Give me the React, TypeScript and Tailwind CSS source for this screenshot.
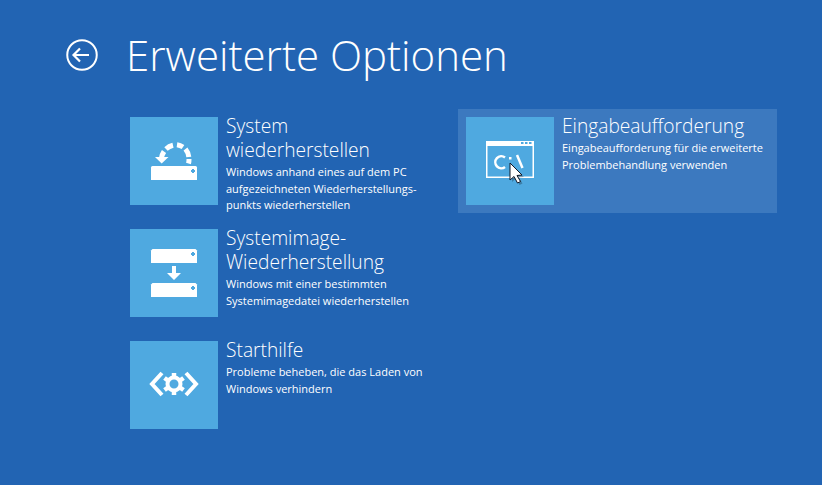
const font = { fontFamily: '"Open Sans", "Noto Sans", sans-serif' };

function RestoreIcon() {
  return (
    <svg width="88" height="88" viewBox="0 0 88 88" fill="white">
      <path d="M21 50.500 a1.500 1.500 0 0 1 1.500 -1.500 H65.500 a1.500 1.500 0 0 1 1.500 1.500 V63 H21 Z" />
      <path d="M62 52 v1 h-1 v2 h1 v1 h2 v-1 h1 v-2 h-1 v-1 Z" fill="#4fa9e0" />
      <path d="M25 40 H38.500 L31.700 46.500 Z" />
      <g fill="none" stroke="white" strokeWidth="5">
        <path d="M31.500 41 A15.500 15.500 0 0 1 34 34.500" />
        <path d="M36 32 A15.500 15.500 0 0 1 43 28.300" />
        <path d="M47 27.800 A15.500 15.500 0 0 1 53 30" />
        <path d="M55.500 32 A15.500 15.500 0 0 1 58.800 40" />
        <path d="M59 42 A15.500 15.500 0 0 1 58.500 46.500" />
      </g>
    </svg>
  );
}

function ImageIcon() {
  return (
    <svg width="88" height="88" viewBox="0 0 88 88" fill="white">
      <path d="M21 21.500 l1.500 -1.500 H65.500 L67 21.500 V34 H21 Z" />
      <path d="M62 23 v1 h-1 v2 h1 v1 h2 v-1 h1 v-2 h-1 v-1 Z" fill="#4fa9e0" />
      <path d="M42 37 H46 V44 H51 L44 51 L37 44 H42 Z" />
      <path d="M21 55.500 l1.500 -1.500 H65.500 L67 55.500 V68 H21 Z" />
      <path d="M62 57 v1 h-1 v2 h1 v1 h2 v-1 h1 v-2 h-1 v-1 Z" fill="#4fa9e0" />
    </svg>
  );
}

function RepairIcon() {
  return (
    <svg width="88" height="88" viewBox="0 0 88 88" fill="none" stroke="white">
      <path d="M32 32 L22 43 L32 54" strokeWidth="4" />
      <path d="M56 32 L66 43 L56 54" strokeWidth="4" />
      <circle cx="44" cy="43" r="6.500" strokeWidth="4" />
      <g strokeWidth="4.500">
        <path d="M44 32 V36" />
        <path d="M44 50 V54" />
        <path d="M34.500 37 L38 39.500" />
        <path d="M50 46.500 L53.500 49" />
        <path d="M34.500 49 L38 46.500" />
        <path d="M50 39.500 L53.500 37" />
      </g>
    </svg>
  );
}

function ConsoleIcon() {
  return (
    <svg width="88" height="88" viewBox="0 0 88 88" fill="none">
      <rect x="20.750" y="24.750" width="46.500" height="35.500" stroke="white" strokeWidth="1.500" />
      <rect x="20" y="24" width="48" height="5" fill="white" />
      <rect x="55" y="25" width="2.500" height="2" fill="#4fa9e0" />
      <rect x="59" y="25" width="2.500" height="2" fill="#4fa9e0" />
      <rect x="63" y="25" width="2.500" height="2" fill="#4fa9e0" />
      <path d="M39 40.500 A6 6 0 1 0 39 50" stroke="white" strokeWidth="2.500" />
      <rect x="43" y="40" width="2.500" height="2.500" fill="white" />
      <path d="M51 38 L56.500 51" stroke="white" strokeWidth="2.500" />
      <path d="M44 46 V63 L48 59.500 L51.500 66 L54.500 64.500 L51 58.500 L56 58 Z" fill="black" opacity="0.25" transform="translate(2 2)" />
      <path d="M44 46 V63 L48 59.500 L51.500 66 L54.500 64.500 L51 58.500 L56 58 Z" fill="white" stroke="#111827" strokeWidth="1" />
    </svg>
  );
}

function Option({
  icon,
  title,
  text,
  active,
}: {
  icon: React.ReactNode;
  title: string[];
  text: string[];
  active?: boolean;
}) {
  return (
    <div className={`flex h-[104px] w-[319px] gap-2 p-2 ${active ? 'bg-[#3c79bf]' : ''}`}>
      <div className="size-[88px] shrink-0 bg-[#4fa9e0]">{icon}</div>
      <div className="-mt-[3px] min-w-0 text-white">
        <div className="text-[19.200px] leading-[24px] font-light whitespace-nowrap">
          {title.map((line) => (
            <div key={line}>{line}</div>
          ))}
        </div>
        <div className="mt-[2px] text-[11px] leading-[16.500px] whitespace-nowrap">
          {text.map((line) => (
            <div key={line}>{line}</div>
          ))}
        </div>
      </div>
    </div>
  );
}

export default function App() {
  return (
    <div className="h-[485px] w-[822px] overflow-hidden bg-[#2264b3] text-white" style={font}>
      <header className="flex items-center gap-[28px] pt-[31px] pl-[66px]">
        <svg width="32" height="32" viewBox="0 0 32 32" fill="none" stroke="white">
          <circle cx="16" cy="16" r="14.750" strokeWidth="2" />
          <path d="M7 16 H23 M14 9.500 L7.500 16 L14 22.500" strokeWidth="2.200" />
        </svg>
        <h1 className="text-[42px] leading-[48px] font-light">Erweiterte Optionen</h1>
      </header>
      <main className="mt-[30px] ml-[122px] flex gap-[17px]">
        <div className="flex flex-col gap-2">
          <Option
            icon={<RestoreIcon />}
            title={['System', 'wiederherstellen']}
            text={[
              'Windows anhand eines auf dem PC',
              'aufgezeichneten Wiederherstellungs-',
              'punkts wiederherstellen',
            ]}
          />
          <Option
            icon={<ImageIcon />}
            title={['Systemimage-', 'Wiederherstellung']}
            text={['Windows mit einer bestimmten', 'Systemimagedatei wiederherstellen']}
          />
          <Option
            icon={<RepairIcon />}
            title={['Starthilfe']}
            text={['Probleme beheben, die das Laden von', 'Windows verhindern']}
          />
        </div>
        <div>
          <Option
            active
            icon={<ConsoleIcon />}
            title={['Eingabeaufforderung']}
            text={['Eingabeaufforderung für die erweiterte', 'Problembehandlung verwenden']}
          />
        </div>
      </main>
    </div>
  );
}
